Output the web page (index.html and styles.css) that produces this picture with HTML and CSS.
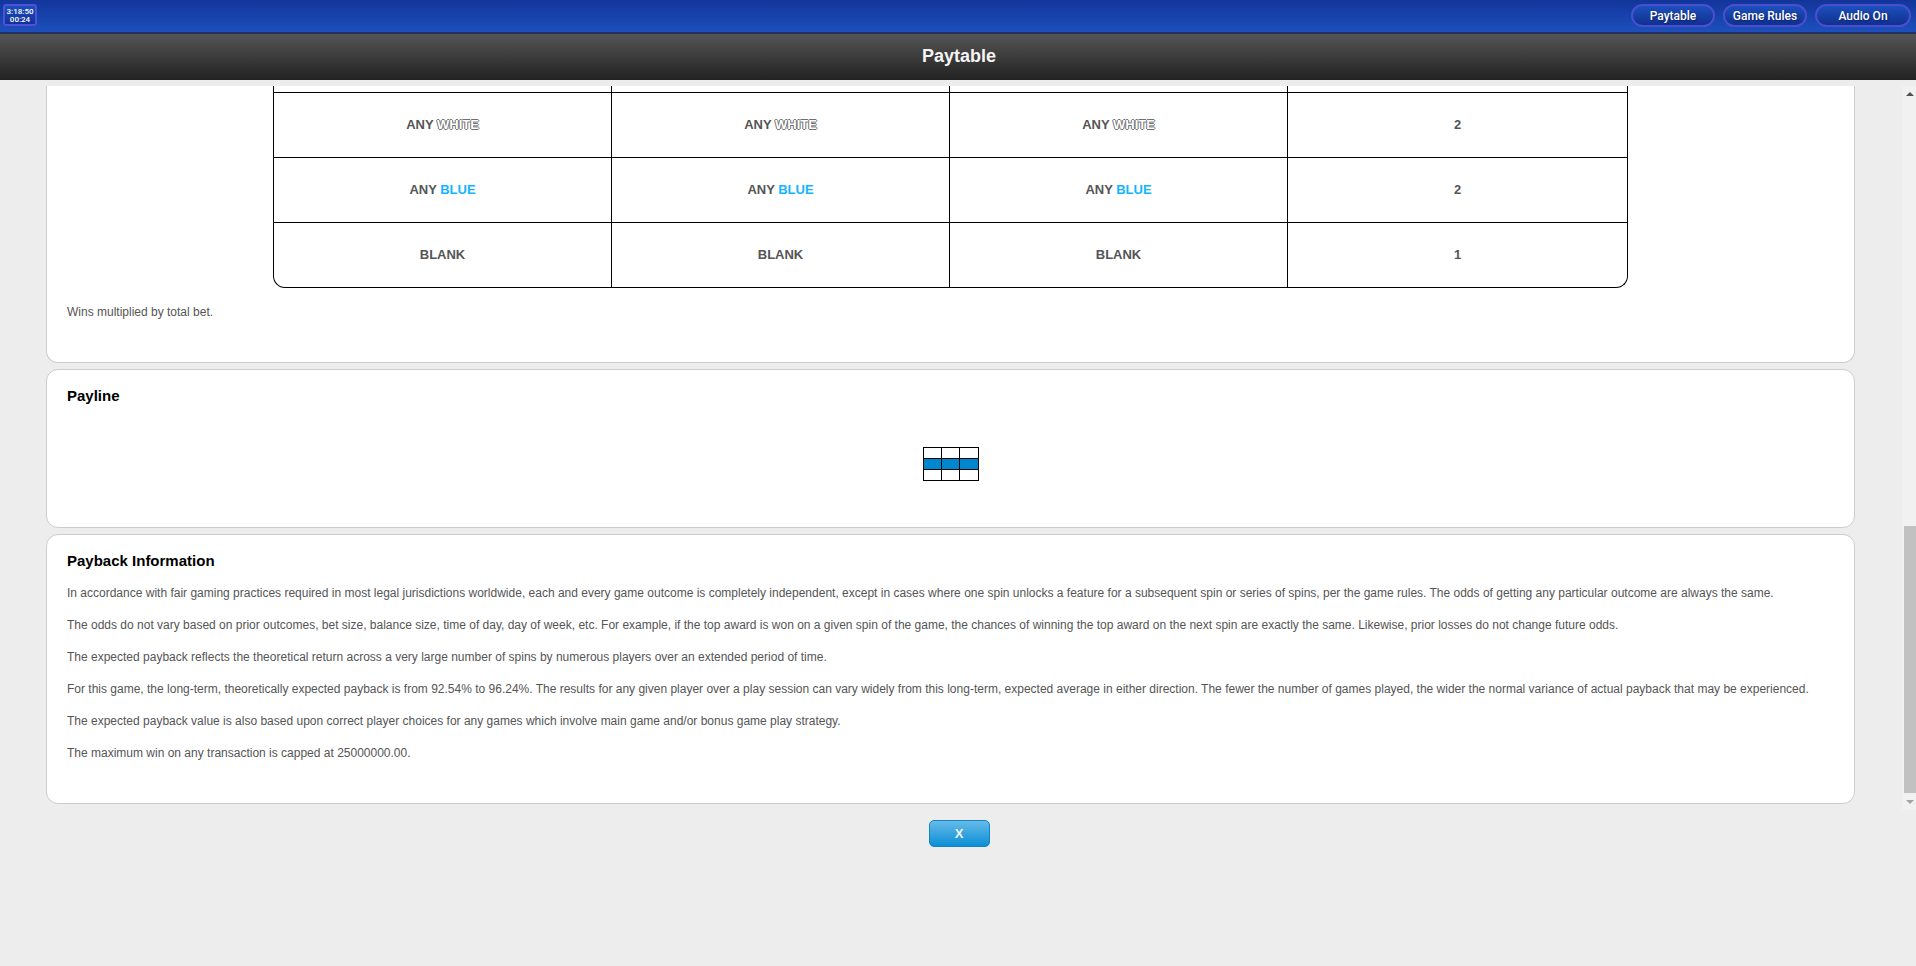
FILE: index.html
```html
<!DOCTYPE html>
<html lang="en">
<head>
  <meta charset="UTF-8">
  <title>Paytable</title>
  <link rel="stylesheet" href="styles.css">
</head>
<body>
  <div class="top-bar">
    <div class="clock">3:18:50<br>00:24</div>
    <div class="top-buttons">
      <button class="top-button btn-paytable">Paytable</button>
      <button class="top-button btn-rules">Game Rules</button>
      <button class="top-button btn-audio">Audio On</button>
    </div>
  </div>
  <div class="title-bar">Paytable</div>

  <div class="scroll-area">
    <div class="panels">
      <div class="panel panel-first">
        <table class="pay-table">
          <tr class="cut-row">
            <td></td><td></td><td></td><td></td>
          </tr>
          <tr>
            <td>ANY <span class="white">WHITE</span></td>
            <td>ANY <span class="white">WHITE</span></td>
            <td>ANY <span class="white">WHITE</span></td>
            <td>2</td>
          </tr>
          <tr>
            <td>ANY <span class="blue">BLUE</span></td>
            <td>ANY <span class="blue">BLUE</span></td>
            <td>ANY <span class="blue">BLUE</span></td>
            <td>2</td>
          </tr>
          <tr>
            <td>BLANK</td>
            <td>BLANK</td>
            <td>BLANK</td>
            <td>1</td>
          </tr>
        </table>
        <p class="note">Wins multiplied by total bet.</p>
      </div>

      <div class="panel panel-payline">
        <h3>Payline</h3>
        <div class="payline">
          <span></span><span></span><span></span>
          <span class="on"></span><span class="on"></span><span class="on"></span>
          <span></span><span></span><span></span>
        </div>
      </div>

      <div class="panel panel-payback">
        <h3>Payback Information</h3>
        <p>In accordance with fair gaming practices required in most legal jurisdictions worldwide, each and every game outcome is completely independent, except in cases where one spin unlocks a feature for a subsequent spin or series of spins, per the game rules. The odds of getting any particular outcome are always the same.</p>
        <p>The odds do not vary based on prior outcomes, bet size, balance size, time of day, day of week, etc. For example, if the top award is won on a given spin of the game, the chances of winning the top award on the next spin are exactly the same. Likewise, prior losses do not change future odds.</p>
        <p>The expected payback reflects the theoretical return across a very large number of spins by numerous players over an extended period of time.</p>
        <p>For this game, the long-term, theoretically expected payback is from 92.54% to 96.24%. The results for any given player over a play session can vary widely from this long-term, expected average in either direction. The fewer the number of games played, the wider the normal variance of actual payback that may be experienced.</p>
        <p>The expected payback value is also based upon correct player choices for any games which involve main game and/or bonus game play strategy.</p>
        <p>The maximum win on any transaction is capped at 25000000.00.</p>
      </div>
    </div>

    <div class="scrollbar">
      <div class="arrow-up"></div>
      <div class="thumb"></div>
      <div class="arrow-down"></div>
    </div>
  </div>

  <div class="close-row">
    <button class="close-button">X</button>
  </div>
</body>
</html>
```

FILE: styles.css
```css
body {
  margin: 0;
  height: 966px;
  overflow: hidden;
  background-color: #ededed;
  font-family: "Liberation Sans", Arial, sans-serif;
  color: #555;
}

.top-bar {
  height: 32px;
  box-sizing: content-box;
  display: flex;
  justify-content: space-between;
  align-items: flex-start;
  padding: 0 5px 0 3px;
  background: linear-gradient(#12359a, #1c50bd);
  border-bottom: 2px solid #26305c;
}

.clock {
  width: 34px;
  height: 22px;
  margin-top: 4px;
  box-sizing: border-box;
  padding-top: 2px;
  border: 2px solid #4f50d8;
  border-radius: 3px;
  background: linear-gradient(#1c50bd, #12309a);
  color: #fff;
  font-family: Roboto, sans-serif;
  font-size: 8px;
  font-weight: 500;
  line-height: 8px;
  text-align: center;
}

.top-buttons {
  display: flex;
  gap: 8px;
  padding-top: 4px;
}

.top-button {
  height: 23px;
  padding: 0;
  border: 2px solid #4a4fd0;
  border-radius: 12px;
  background: linear-gradient(#1c50bd, #11308f);
  color: #fff;
  font-family: Roboto, sans-serif;
  font-size: 12px;
  font-weight: 500;
  text-shadow: 1px 1px 2px #0b1f6a;
}

.btn-paytable { width: 84px; }
.btn-rules { width: 84px; }
.btn-audio { width: 96px; }

.title-bar {
  height: 46px;
  padding-left: 2px;
  line-height: 44px;
  text-align: center;
  background: linear-gradient(#555, #222);
  color: #f4f4f4;
  font-size: 18px;
  font-weight: bold;
}

.scroll-area {
  display: flex;
  height: 724px;
  margin-top: 6px;
  padding-left: 46px;
}

.panels {
  width: 1809px;
}

.panel {
  box-sizing: border-box;
  background: #fff;
  border: 1px solid #ccc;
  border-radius: 12px;
  padding: 0 20px;
  margin-bottom: 6px;
}

.panel-first {
  height: 277px;
  border-top: none;
  border-top-left-radius: 0;
  border-top-right-radius: 0;
}

.panel-payline {
  height: 159px;
}

.panel-payback {
  height: 270px;
}

h3 {
  margin: 0;
  padding-top: 18px;
  color: #000;
  font-size: 15px;
  line-height: 16px;
}

.pay-table {
  width: 1355px;
  margin-left: 206px;
  border-collapse: separate;
  border-spacing: 0;
  table-layout: fixed;
  border-left: 1px solid #000;
  border-right: 1px solid #000;
  border-bottom: 1px solid #000;
  border-bottom-left-radius: 12px;
  border-bottom-right-radius: 12px;
}

.pay-table td {
  height: 63px;
  padding: 0 0 1px;
  text-align: center;
  font-size: 13px;
  font-weight: bold;
  border-top: 1px solid #000;
  border-left: 1px solid #000;
}

.pay-table td:first-child {
  width: 337px;
  border-left: none;
}

.pay-table td:nth-child(2),
.pay-table td:nth-child(3) {
  width: 337px;
}

.pay-table .cut-row td {
  height: 6px;
  padding: 0;
  border-top: none;
}

.white {
  color: #fff;
  text-shadow: 1px 0 0 #6e6e6e, -1px 0 0 #6e6e6e, 0 1px 0 #6e6e6e, 0 -1px 0 #6e6e6e;
}

.blue {
  color: #12b5ff;
}

p {
  margin: 0;
  font-size: 12px;
  line-height: 14px;
  margin-top: 18px;
}

.note {
  margin-top: 17px;
}

.panel-payback h3 + p {
  margin-top: 17px;
}

.payline {
  width: 56px;
  height: 34px;
  margin: 43px auto 0;
  box-sizing: border-box;
  display: grid;
  grid-template-columns: repeat(3, 1fr);
  grid-template-rows: repeat(3, 1fr);
  gap: 1px;
  padding: 1px;
  background: #000;
}

.payline span {
  background: #fff;
}

.payline .on {
  background: #0085cf;
}

.scrollbar {
  position: relative;
  width: 14px;
  margin-left: 47px;
  background: #f1f1f1;
}

.thumb {
  margin: 440px 0 0 2px;
  height: 267px;
  background: #c1c1c1;
}

.arrow-up {
  position: absolute;
  top: 6px;
  left: 4px;
  border: 4px solid transparent;
  border-top: none;
  border-bottom: 4px solid #505050;
}

.arrow-down {
  position: absolute;
  top: 714px;
  left: 4px;
  border: 4px solid transparent;
  border-bottom: none;
  border-top: 4px solid #a3a3a3;
}

.close-row {
  text-align: center;
  margin-top: 10px;
  padding-left: 2px;
}

.close-button {
  width: 61px;
  height: 27px;
  padding: 0;
  border: 1px solid #1285c9;
  border-radius: 5px;
  background: linear-gradient(#67bbe8, #0b8fd6);
  color: #f2f2f2;
  font-family: "Liberation Sans", Arial, sans-serif;
  font-size: 13px;
  font-weight: bold;
}
```
